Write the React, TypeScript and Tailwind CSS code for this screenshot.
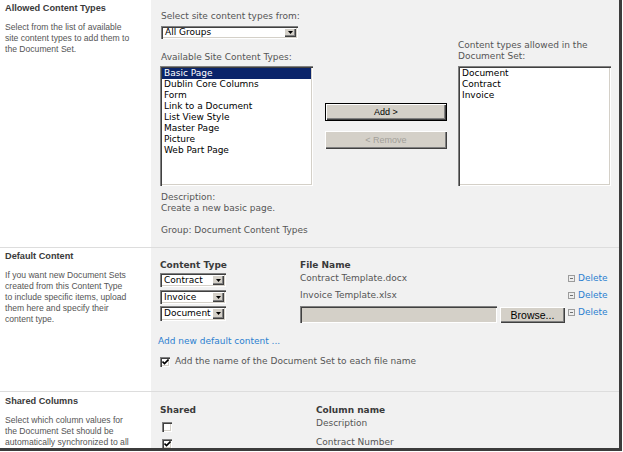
import React from 'react';

const verd = "font-['DejaVu_Sans',Verdana,sans-serif] text-[9px] leading-[11px]";
const tah = "font-['Liberation_Sans',Tahoma,Arial,sans-serif] text-[8.6px] leading-[11px]";
const raised = 'shadow-[inset_1px_1px_0_#ffffff,inset_-1px_-1px_0_#404040,inset_-2px_-2px_0_#808080]';
const sunken = 'shadow-[inset_1px_1px_0_#808080,inset_2px_2px_0_#404040,inset_-1px_-1px_0_#ffffff,inset_-2px_-2px_0_#d4d0c8]';

function Arrow() {
  return (
    <span className={`flex w-[12px] shrink-0 items-center justify-center bg-[#d4d0c8] ${raised}`}>
      <svg width="5" height="3" viewBox="0 0 5 3">
        <path d="M0 0h5L2.5 3z" fill="#000" />
      </svg>
    </span>
  );
}

function Select({ value, w, h }: { value: string; w: string; h: string }) {
  return (
    <div className={`flex ${w} ${h} bg-white p-[2px] ${sunken}`}>
      <span className={`flex-1 self-center overflow-hidden whitespace-nowrap pl-[2px] text-black ${verd} text-[9.5px] leading-none`}>
        {value}
      </span>
      <Arrow />
    </div>
  );
}

function Check({ on }: { on?: boolean }) {
  return (
    <span className={`flex h-[10px] w-[10px] items-center justify-center bg-white ${sunken}`}>
      {on && (
        <svg width="7" height="6" viewBox="0 0 7 6">
          <path d="M0.5 2.5L2.5 4.5L6.5 0.5" stroke="#000" strokeWidth="1.6" fill="none" />
        </svg>
      )}
    </span>
  );
}

function DeleteLink() {
  return (
    <div className={`flex items-center gap-[3px] self-start ${verd}`}>
      <span className="flex h-[7px] w-[7px] items-center justify-center border border-[#9c9c9c] bg-[#eeeeee]">
        <span className="h-px w-[3px] bg-[#707070]" />
      </span>
      <span className="text-[#2b7fd0]">Delete</span>
    </div>
  );
}

function ListBox({ items, selected }: { items: string[]; selected?: number }) {
  return (
    <div className={`h-[120px] w-[153px] bg-white p-[2px] ${sunken}`}>
      {items.map((it, i) => (
        <div
          key={it}
          className={`${verd} leading-[10.7px] pl-[2px] ${i === selected ? 'bg-[#0a246a] text-white' : 'text-black'}`}
        >
          {it}
        </div>
      ))}
    </div>
  );
}

function LeftCol({ title, lines, top }: { title: string; lines: string[]; top: string }) {
  return (
    <div className={`w-[151px] shrink-0 bg-white pl-[5px] ${top}`}>
      <div className={`${tah} text-[9.2px] font-bold text-[#3a3a3a]`}>{title}</div>
      <div className="mt-[8px]">
        {lines.map((l) => (
          <div key={l} className={`${tah} whitespace-nowrap text-[#555]`}>
            {l}
          </div>
        ))}
      </div>
    </div>
  );
}

export default function App() {
  return (
    <div className="h-[452px] w-[623px] overflow-hidden bg-white">
      <div className="box-border flex h-[451px] w-[622px] flex-col overflow-hidden border-b-[3px] border-r-[3px] border-[#3c3c3c] bg-[#f1f1f1]">
        {/* Allowed Content Types */}
        <section className="flex h-[248px] shrink-0 border-b border-[#dddddd]">
          <LeftCol
            title="Allowed Content Types"
            top="pt-[3px]"
            lines={['Select from the list of available', 'site content types to add them to', 'the Document Set.']}
          />
          <div className="flex-1 pl-[9px] pt-[11px]">
            <div className="flex items-end">
              <div className="w-[153px]">
                <div className={`${verd} ml-px whitespace-nowrap text-[#555]`}>Select site content types from:</div>
                <div className="ml-px mt-[4px]">
                  <Select value="All Groups" w="w-[137px]" h="h-[13px]" />
                </div>
                <div className={`${verd} ml-px mt-[13px] whitespace-nowrap text-[#555]`}>Available Site Content Types:</div>
                <div className="mt-[3px]">
                  <ListBox
                    selected={0}
                    items={['Basic Page', 'Dublin Core Columns', 'Form', 'Link to a Document', 'List View Style', 'Master Page', 'Picture', 'Web Part Page']}
                  />
                </div>
              </div>
              <div className="mb-[37px] ml-[12px] mr-[11px] flex w-[122px] flex-col gap-[10px]">
                <button className="h-[18px] border border-black bg-[#d4d0c8] p-0">
                  <span className={`flex h-full items-center justify-center ${raised} ${tah} text-[9px] text-black`}>Add &gt;</span>
                </button>
                <button className={`h-[18px] bg-[#d4d0c8] ${raised} ${tah} text-[9px] text-[#a3a09a]`}>&lt; Remove</button>
              </div>
              <div className="w-[153px]">
                <div className={`${verd} text-[#555]`}>
                  Content types allowed in the
                  <br />
                  Document Set:
                </div>
                <div className="mt-[4px]">
                  <ListBox items={['Document', 'Contract', 'Invoice']} />
                </div>
              </div>
            </div>
            <div className={`${verd} ml-px mt-[6px] leading-[10.5px] text-[#555]`}>
              <div>Description:</div>
              <div>Create a new basic page.</div>
              <div className="h-[10.5px]" />
              <div>Group: Document Content Types</div>
            </div>
          </div>
        </section>

        {/* Default Content */}
        <section className="flex h-[144px] shrink-0 border-b border-[#dddddd]">
          <LeftCol
            title="Default Content"
            top="pt-[3px]"
            lines={['If you want new Document Sets', 'created from this Content Type', 'to include specific items, upload', 'them here and specify their', 'content type.']}
          />
          <div className="flex-1 pl-[9px] pt-[12px]">
            <div className="grid grid-cols-[140px_268px_auto]">
              <div className={`${verd} font-bold text-[#3a3a3a]`}>Content Type</div>
              <div className={`${verd} font-bold text-[#3a3a3a]`}>File Name</div>
              <div />
            </div>
            <div className="mt-[2px] grid grid-cols-[140px_268px_auto] grid-rows-[17px_16px_17px]">
              <Select value="Contract" w="w-[66px]" h="h-[14px]" />
              <div className={`${verd} text-[#555]`}>Contract Template.docx</div>
              <DeleteLink />
              <Select value="Invoice" w="w-[66px]" h="h-[14px]" />
              <div className={`${verd} text-[#555]`}>Invoice Template.xlsx</div>
              <DeleteLink />
              <Select value="Document" w="w-[66px]" h="h-[15px]" />
              <div className="flex gap-[3px]">
                <div className={`h-[17px] w-[197px] bg-[#d4d0c8] ${sunken}`} />
                <button
                  className={`mt-px h-[16px] w-[65px] bg-[#d4d0c8] ${raised} font-['Liberation_Sans',Arial,sans-serif] text-[10.5px] leading-none text-black`}
                >
                  Browse...
                </button>
              </div>
              <div className="pt-px">
                <DeleteLink />
              </div>
            </div>
            <div className={`${verd} -ml-[2px] mt-[13px] text-[#2b7fd0]`}>Add new default content ...</div>
            <div className="mt-[9px] flex items-center gap-[5px]">
              <Check on />
              <span className={`${verd} text-[#555]`}>Add the name of the Document Set to each file name</span>
            </div>
          </div>
        </section>

        {/* Shared Columns */}
        <section className="flex flex-1">
          <LeftCol
            title="Shared Columns"
            top="pt-[4px]"
            lines={['Select which column values for', 'the Document Set should be', 'automatically synchronized to all']}
          />
          <div className="flex-1 pl-[9px] pt-[13px]">
            <div className="grid grid-cols-[156px_auto] grid-rows-[11px_19px_16px]">
              <div className={`${verd} font-bold text-[#3a3a3a]`}>Shared</div>
              <div className={`${verd} font-bold text-[#3a3a3a]`}>Column name</div>
              <div className="pl-[2px] pt-[6px]">
                <Check />
              </div>
              <div className={`${verd} pt-[2px] text-[#555]`}>Description</div>
              <div className="pl-[2px] pt-[4px]">
                <Check on />
              </div>
              <div className={`${verd} pt-[2px] text-[#555]`}>Contract Number</div>
            </div>
          </div>
        </section>
      </div>
    </div>
  );
}
